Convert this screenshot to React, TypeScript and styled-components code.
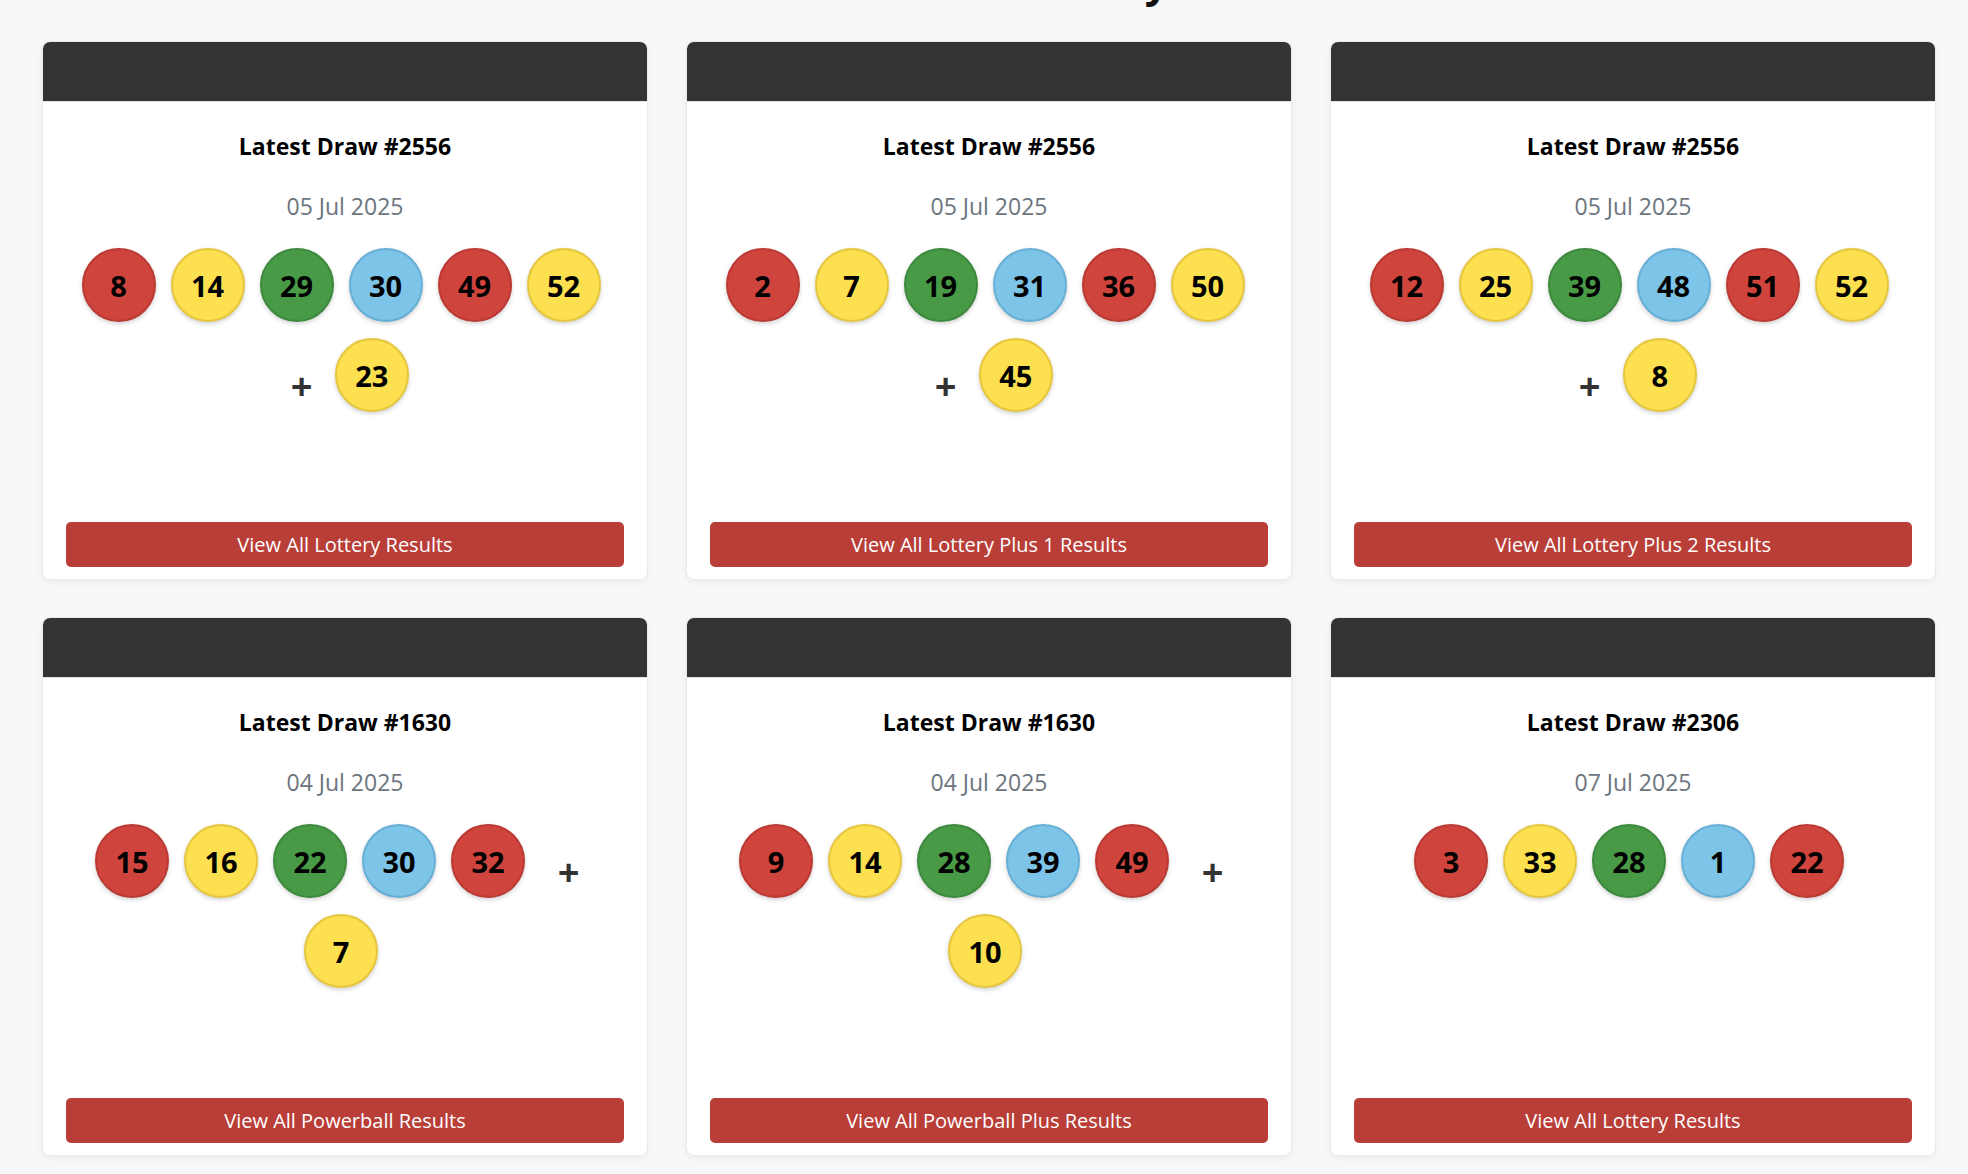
import React from "react";
import styled, { createGlobalStyle } from "styled-components";

type BallColor = "red" | "yellow" | "green" | "blue";

interface Draw {
  drawNo: number;
  date: string;
  numbers: number[];
  bonus?: number;
  link: string;
}

const draws: Draw[] = [
  { drawNo: 2556, date: "05 Jul 2025", numbers: [8, 14, 29, 30, 49, 52], bonus: 23, link: "View All Lottery Results" },
  { drawNo: 2556, date: "05 Jul 2025", numbers: [2, 7, 19, 31, 36, 50], bonus: 45, link: "View All Lottery Plus 1 Results" },
  { drawNo: 2556, date: "05 Jul 2025", numbers: [12, 25, 39, 48, 51, 52], bonus: 8, link: "View All Lottery Plus 2 Results" },
  { drawNo: 1630, date: "04 Jul 2025", numbers: [15, 16, 22, 30, 32], bonus: 7, link: "View All Powerball Results" },
  { drawNo: 1630, date: "04 Jul 2025", numbers: [9, 14, 28, 39, 49], bonus: 10, link: "View All Powerball Plus Results" },
  { drawNo: 2306, date: "07 Jul 2025", numbers: [3, 33, 28, 1, 22], link: "View All Lottery Results" },
];

const cycle: BallColor[] = ["red", "yellow", "green", "blue"];

const palette: Record<BallColor, { fill: string; edge: string }> = {
  red: { fill: "#cf443d", edge: "#bb3a34" },
  yellow: { fill: "#fce04f", edge: "#e6c63f" },
  green: { fill: "#489a47", edge: "#3d893d" },
  blue: { fill: "#7cc4e8", edge: "#68afd6" },
};

const App: React.FC = () => {
  return (
    <>
      <GlobalStyle />
      <Page>
        <Heading>Latest SA Lottery</Heading>
        <Grid>
          {draws.map((d, i) => (
            <Card key={i}>
              <CardHeader />
              <CardBody>
                <DrawTitle>Latest Draw #{d.drawNo}</DrawTitle>
                <DrawDate>{d.date}</DrawDate>
                <Balls>
                  {d.numbers.map((n, j) => (
                    <Ball key={j} $color={cycle[j % cycle.length]}>
                      {n}
                    </Ball>
                  ))}
                  {d.bonus !== undefined && (
                    <>
                      <Plus>+</Plus>
                      <Ball $color="yellow">{d.bonus}</Ball>
                    </>
                  )}
                </Balls>
                <ResultsButton>{d.link}</ResultsButton>
              </CardBody>
            </Card>
          ))}
        </Grid>
      </Page>
    </>
  );
};

export default App;

const GlobalStyle = createGlobalStyle`
  html, body {
    margin: 0;
    padding: 0;
    background: #f7f8fa;
    overflow: hidden;
  }
  body {
    font-family: "Open Sans", "Noto Sans", Arial, sans-serif;
    color: #212529;
  }
  * {
    box-sizing: border-box;
  }
`;

const Page = styled.div`
  padding: 0 32px 40px 42px;
`;

const Heading = styled.h1`
  margin: -43px 0 36px;
  font-size: 42px;
  line-height: 48px;
  font-weight: 700;
  text-align: center;
  color: #111;
`;

const Grid = styled.div`
  display: grid;
  grid-template-columns: repeat(3, 606px);
  gap: 37px 38px;
`;

const Card = styled.div`
  display: flex;
  flex-direction: column;
  min-height: 539px;
  background: #fff;
  border: 1px solid #e9eaec;
  border-radius: 8px;
  box-shadow: 0 2px 6px rgba(0, 0, 0, 0.06);
  overflow: hidden;
`;

const CardHeader = styled.div`
  height: 60px;
  background: #333333;
  border-bottom: 1px solid #e4e4e4;
`;

const CardBody = styled.div`
  flex: 1;
  display: flex;
  flex-direction: column;
  align-items: center;
  padding: 0 23px 12px;
`;

const DrawTitle = styled.h3`
  margin: 31px 0 0;
  font-size: 23px;
  line-height: 1.2;
  font-weight: 700;
  color: #000;
`;

const DrawDate = styled.p`
  margin: 32px 0 0;
  font-size: 23px;
  line-height: 1.2;
  font-weight: 400;
  color: #6c757d;
`;

const Balls = styled.div`
  display: flex;
  flex-wrap: wrap;
  justify-content: center;
  align-items: center;
  align-self: stretch;
  margin-top: 20px;
  padding-right: 8px;
`;

const Ball = styled.span<{ $color: BallColor }>`
  display: flex;
  align-items: center;
  justify-content: center;
  width: 74px;
  height: 74px;
  margin: 8px 7.5px;
  border-radius: 50%;
  background: ${(p) => palette[p.$color].fill};
  border: 2px solid ${(p) => palette[p.$color].edge};
  box-shadow: 0 2px 4px rgba(0, 0, 0, 0.18);
  font-size: 29px;
  font-weight: 700;
  color: #000;
`;

const Plus = styled.span`
  margin: 0 15px 0 25px;
  padding-top: 19px;
  font-size: 38px;
  line-height: 1;
  font-weight: 700;
  color: #333;
`;

const ResultsButton = styled.a`
  display: flex;
  align-items: center;
  justify-content: center;
  align-self: stretch;
  height: 45px;
  margin-top: auto;
  border-radius: 5px;
  background: #b83e37;
  color: #fff;
  font-size: 20px;
  text-decoration: none;
  cursor: pointer;
`;
